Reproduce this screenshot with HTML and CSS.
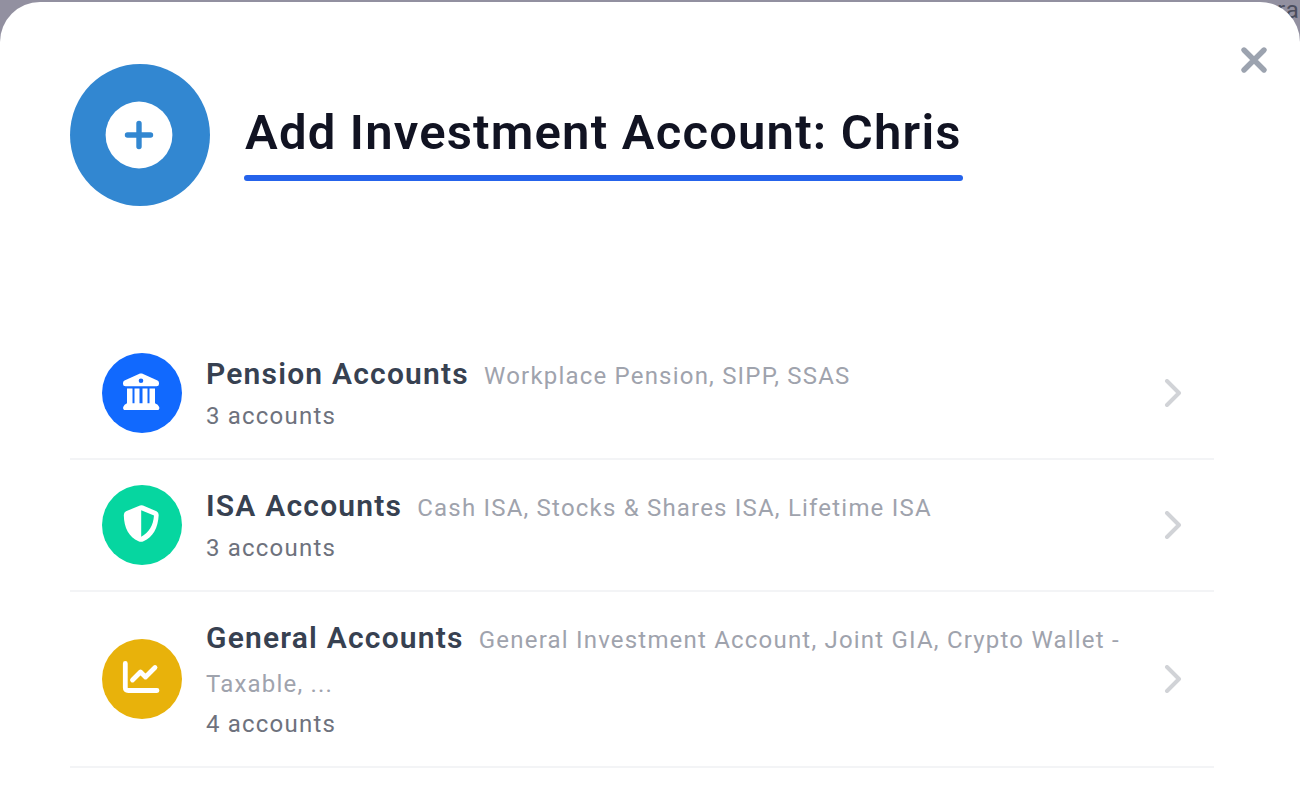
FILE: index.html
```html
<!DOCTYPE html>
<html lang="en">
<head>
<meta charset="utf-8">
<meta name="viewport" content="width=device-width, initial-scale=1">
<title>Add Investment Account</title>
<link rel="stylesheet" href="styles.css">
</head>
<body>
<div class="backdrop" aria-hidden="true">ra</div>
<main class="sheet" role="dialog" aria-labelledby="sheet-title">
  <button class="close" type="button" aria-label="Close">
    <svg width="28" height="28" viewBox="0 0 28 28"><path d="M4 4L24 24M24 4L4 24" fill="none" stroke="currentColor" stroke-width="5.400" stroke-linecap="round"/></svg>
  </button>
  <header class="header">
    <svg class="badge" width="140" height="142" viewBox="0 0 140 142" aria-hidden="true">
      <ellipse cx="70" cy="71" rx="70" ry="71" fill="#3287d1"/>
      <circle cx="69" cy="71" r="33.4" fill="#fff"/>
      <path d="M69 59.5V82.500M57.500 71H80.500" fill="none" stroke="#3287d1" stroke-width="5.400" stroke-linecap="round"/>
    </svg>
    <h1 class="title" id="sheet-title">Add Investment Account: Chris</h1>
  </header>
  <div class="list">
    <button class="row" type="button">
      <span class="icon pension">
        <svg width="40" height="40" viewBox="0 0 40 40" aria-hidden="true"><path fill="currentColor" fill-rule="evenodd" d="M18 .6Q19 .2 20 .6L35.500 7.500Q37 8.300 37 10V11Q37 13.200 34.500 13.200H3.500Q1 13.200 1 11V10Q1 8.300 2.500 7.500ZM19 5.400a2.300 2.300 0 1 0 0 4.600a2.300 2.300 0 0 0 0-4.600ZM5 15.600H10.500V30.300H12.500V15.600H17.500V30.300H20.500V15.600H25.500V30.300H27.500V15.600H33V30.300Q36.300 31.500 37.200 34Q38 37.100 35 37.100H3.500Q.5 37.100 1.200 34Q2.200 31.500 5 30.300Z"/></svg>
      </span>
      <span class="info">
        <span class="line"><span class="name">Pension Accounts</span> <span class="detail">Workplace Pension, SIPP, SSAS</span></span>
        <span class="count">3 accounts</span>
      </span>
      <svg class="chevron" width="18" height="28" viewBox="0 0 18 28" aria-hidden="true"><path d="M3 2L15 14L3 26"/></svg>
    </button>
    <button class="row" type="button">
      <span class="icon isa">
        <svg width="40" height="40" viewBox="0 0 40 40" aria-hidden="true"><path fill="currentColor" fill-rule="evenodd" d="M18 .6Q19.500 0 21 .6L34.500 6.200Q36.700 7.300 36.700 10C36 23 31 32 21.500 36.300Q19 37.400 16.500 36.300C7 32 2 23 1.800 10Q1.800 7.300 4 6.200ZM19.200 5.300V31.800C27 27.500 31.300 20.500 32 10.500Z"/></svg>
      </span>
      <span class="info">
        <span class="line"><span class="name">ISA Accounts</span> <span class="detail">Cash ISA, Stocks &amp; Shares ISA, Lifetime ISA</span></span>
        <span class="count">3 accounts</span>
      </span>
      <svg class="chevron" width="18" height="28" viewBox="0 0 18 28" aria-hidden="true"><path d="M3 2L15 14L3 26"/></svg>
    </button>
    <button class="row" type="button">
      <span class="icon general">
        <svg width="40" height="40" viewBox="0 0 40 40" aria-hidden="true"><path fill="none" stroke="currentColor" stroke-width="4.800" stroke-linecap="round" stroke-linejoin="round" d="M3.300 4.500V28.500Q3.300 31.500 6.300 31.500H35M10.500 21L18.500 13L23.500 18L33 8.500"/></svg>
      </span>
      <span class="info">
        <span class="line"><span class="name">General Accounts</span> <span class="detail">General Investment Account, Joint GIA, Crypto Wallet - Taxable, ...</span></span>
        <span class="count">4 accounts</span>
      </span>
      <svg class="chevron" width="18" height="28" viewBox="0 0 18 28" aria-hidden="true"><path d="M3 2L15 14L3 26"/></svg>
    </button>
  </div>
</main>
</body>
</html>
```
FILE: styles.css
```css
* { box-sizing: border-box; }

body {
  margin: 0;
  padding-top: 2px;
  min-height: 100vh;
  display: flex;
  flex-direction: column;
  background: #9290a0;
  font-family: Roboto, "Liberation Sans", sans-serif;
  font-size: 24px;
  letter-spacing: 0.05em;
}

.backdrop {
  position: absolute;
  top: 0;
  right: 0;
  line-height: 20px;
  color: #4b4d5d;
}

.sheet {
  position: relative;
  flex: 1;
  padding: 62px 86px 32px 70px;
  border-radius: 40px 40px 0 0;
  background: #fff;
}

.close {
  position: absolute;
  top: 44px;
  right: 32px;
  display: flex;
  padding: 0;
  border: 0;
  background: none;
  color: #9ca3af;
  cursor: pointer;
}

.header {
  display: flex;
  align-items: center;
  gap: 34px;
  margin-bottom: 122px;
}

.badge { flex: none; }

.title {
  margin: 0;
  padding: 2px 1px 0;
  font-size: 49px;
  line-height: 84px;
  font-weight: 600;
  color: #111322;
}

.title::after {
  content: "";
  display: block;
  height: 6px;
  margin: 0 -1px;
  border-radius: 3px;
  background: #2563eb;
}

.row {
  display: flex;
  align-items: center;
  gap: 24px;
  width: 100%;
  padding: 24px 32px;
  border: 0;
  border-bottom: 2px solid #f3f4f6;
  background: none;
  font: inherit;
  letter-spacing: inherit;
  text-align: left;
  cursor: pointer;
}

.icon {
  flex: none;
  display: flex;
  align-items: center;
  justify-content: center;
  width: 80px;
  height: 80px;
  border-radius: 50%;
  color: #fff;
}

.pension { background: #1169fe; }
.isa { background: #06d6a0; }
.general { background: #e8b20b; }

.info { flex: 1; }

.line {
  display: block;
  line-height: 44px;
}

.name {
  margin-right: 8px;
  font-size: 30px;
  font-weight: 600;
  color: #374151;
}

.detail { color: #9fa3ad; }

.count {
  display: block;
  line-height: 36px;
  color: #6e727d;
}

.chevron {
  flex: none;
  fill: none;
  stroke: #d1d3d7;
  stroke-width: 4;
  stroke-linecap: round;
  stroke-linejoin: round;
}
```
